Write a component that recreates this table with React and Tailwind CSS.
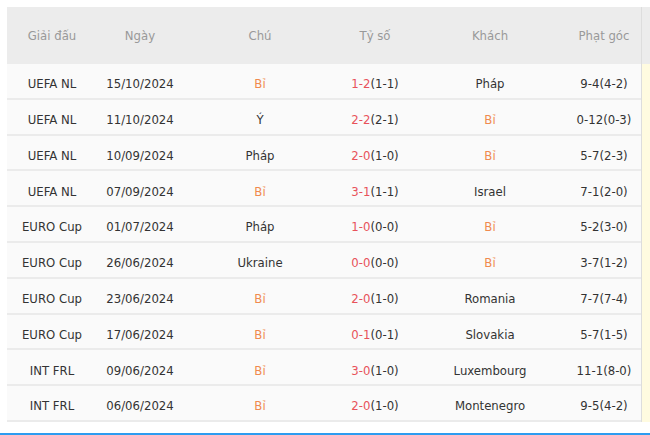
const rows = [
  ['UEFA NL', '15/10/2024', 'Bỉ', '1-2', '(1-1)', 'Pháp', '9-4(4-2)'],
  ['UEFA NL', '11/10/2024', 'Ý', '2-2', '(2-1)', 'Bỉ', '0-12(0-3)'],
  ['UEFA NL', '10/09/2024', 'Pháp', '2-0', '(1-0)', 'Bỉ', '5-7(2-3)'],
  ['UEFA NL', '07/09/2024', 'Bỉ', '3-1', '(1-1)', 'Israel', '7-1(2-0)'],
  ['EURO Cup', '01/07/2024', 'Pháp', '1-0', '(0-0)', 'Bỉ', '5-2(3-0)'],
  ['EURO Cup', '26/06/2024', 'Ukraine', '0-0', '(0-0)', 'Bỉ', '3-7(1-2)'],
  ['EURO Cup', '23/06/2024', 'Bỉ', '2-0', '(1-0)', 'Romania', '7-7(7-4)'],
  ['EURO Cup', '17/06/2024', 'Bỉ', '0-1', '(0-1)', 'Slovakia', '5-7(1-5)'],
  ['INT FRL', '09/06/2024', 'Bỉ', '3-0', '(1-0)', 'Luxembourg', '11-1(8-0)'],
  ['INT FRL', '06/06/2024', 'Bỉ', '2-0', '(1-0)', 'Montenegro', '9-5(4-2)'],
]

const cols = 'grid grid-cols-[90px_86px_154px_76px_154px_74px]'

function Team({ name }) {
  return <span className={name === 'Bỉ' ? 'text-[#f08a4e]' : ''}>{name}</span>
}

export default function App() {
  return (
    <div
      className="w-[650px] h-[435px] bg-white pt-[7px] pl-[7px] text-[13px] text-[#333] overflow-hidden"
      style={{ fontFamily: '"DejaVu Sans Condensed", "DejaVu Sans", sans-serif', fontStretch: 'condensed' }}
    >
      <div className="flex">
        <div className="w-[634px]">
          <div className={`${cols} h-[57px] bg-[#ececec] text-[#999] items-center text-center`}>
            <div>Giải đấu</div>
            <div>Ngày</div>
            <div>Chú</div>
            <div>Tỷ số</div>
            <div>Khách</div>
            <div>Phạt góc</div>
          </div>
          {rows.map((r, i) => (
            <div key={i} className={`${cols} h-[35.8px] pt-[6px] bg-[#fafafa] border-b-2 border-[#ebebeb] items-center text-center`}>
              <div>{r[0]}</div>
              <div>{r[1]}</div>
              <div><Team name={r[2]} /></div>
              <div><span className="text-[#e8525a]">{r[3]}</span>{r[4]}</div>
              <div><Team name={r[5]} /></div>
              <div>{r[6]}</div>
            </div>
          ))}
        </div>
        <div className="flex-1 flex flex-col border-l border-[#dddddd]">
          <div className="h-[57px] bg-[#ececec]" />
          <div className="h-[358px] bg-[#fffbe0]" />
        </div>
      </div>
      <div className="mt-[11px] -ml-[7px] h-[2px] w-[650px] bg-[#2d9cf0]" />
    </div>
  )
}
